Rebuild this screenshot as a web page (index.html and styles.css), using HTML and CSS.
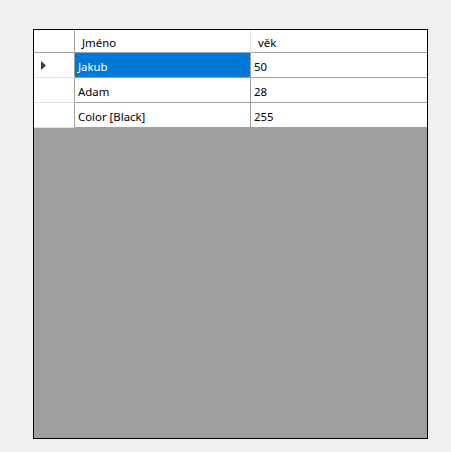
FILE: index.html
```html
<!DOCTYPE html>
<html>
<head>
<meta charset="utf-8">
<link rel="stylesheet" href="styles.css">
</head>
<body>
<div class="dgv">
  <div class="row head">
    <div class="rh"></div>
    <div class="cell c1 hcell">Jméno</div>
    <div class="cell c2 hcell">věk</div>
  </div>
  <div class="row">
    <div class="rh"><svg class="arrow" width="5" height="9" viewBox="0 0 5 9"><polygon points="0,0 5,4.5 0,9" fill="#3c3c3c"/></svg></div>
    <div class="cell c1 sel">Jakub</div>
    <div class="cell c2">50</div>
  </div>
  <div class="row">
    <div class="rh"></div>
    <div class="cell c1">Adam</div>
    <div class="cell c2">28</div>
  </div>
  <div class="row">
    <div class="rh"></div>
    <div class="cell c1">Color [Black]</div>
    <div class="cell c2">255</div>
  </div>
</div>
</body>
</html>
```

FILE: styles.css
```css
html, body {
  margin: 0;
  padding: 0;
  background: #f0f0f0;
}
body {
  padding: 29px 0 0 33px;
  font-family: "Noto Sans", "Open Sans", sans-serif;
  font-size: 11.4px;
  color: #000;
}
.dgv {
  box-sizing: border-box;
  width: 395px;
  height: 410px;
  border: 1px solid #000;
  background: #a0a0a0;
  display: flex;
  flex-direction: column;
}
.row {
  display: flex;
  height: 25px;
}
.row.head {
  height: 23px;
}
.rh {
  box-sizing: border-box;
  width: 41px;
  background: #fff;
  border-right: 1px solid #a0a0a0;
  border-bottom: 1px solid #e3e3e3;
  display: flex;
  align-items: flex-start;
  padding: 8px 0 0 7px;
}
.head .rh {
  border-bottom: 1px solid #a0a0a0;
}
.cell {
  box-sizing: border-box;
  background: #fff;
  border-bottom: 1px solid #a0a0a0;
  display: flex;
  align-items: center;
  padding: 2px 0 0 3px;
  white-space: nowrap;
}
.c1 {
  width: 176px;
  border-right: 1px solid #a0a0a0;
}
.c2 {
  flex: 1;
}
.hcell {
  padding-left: 7px;
  padding-top: 3px;
}
.head .c1 {
  border-right: 1px solid #e3e3e3;
}
.sel {
  background: #0078d7;
  color: #fff;
}
.arrow {
  display: block;
}
```
